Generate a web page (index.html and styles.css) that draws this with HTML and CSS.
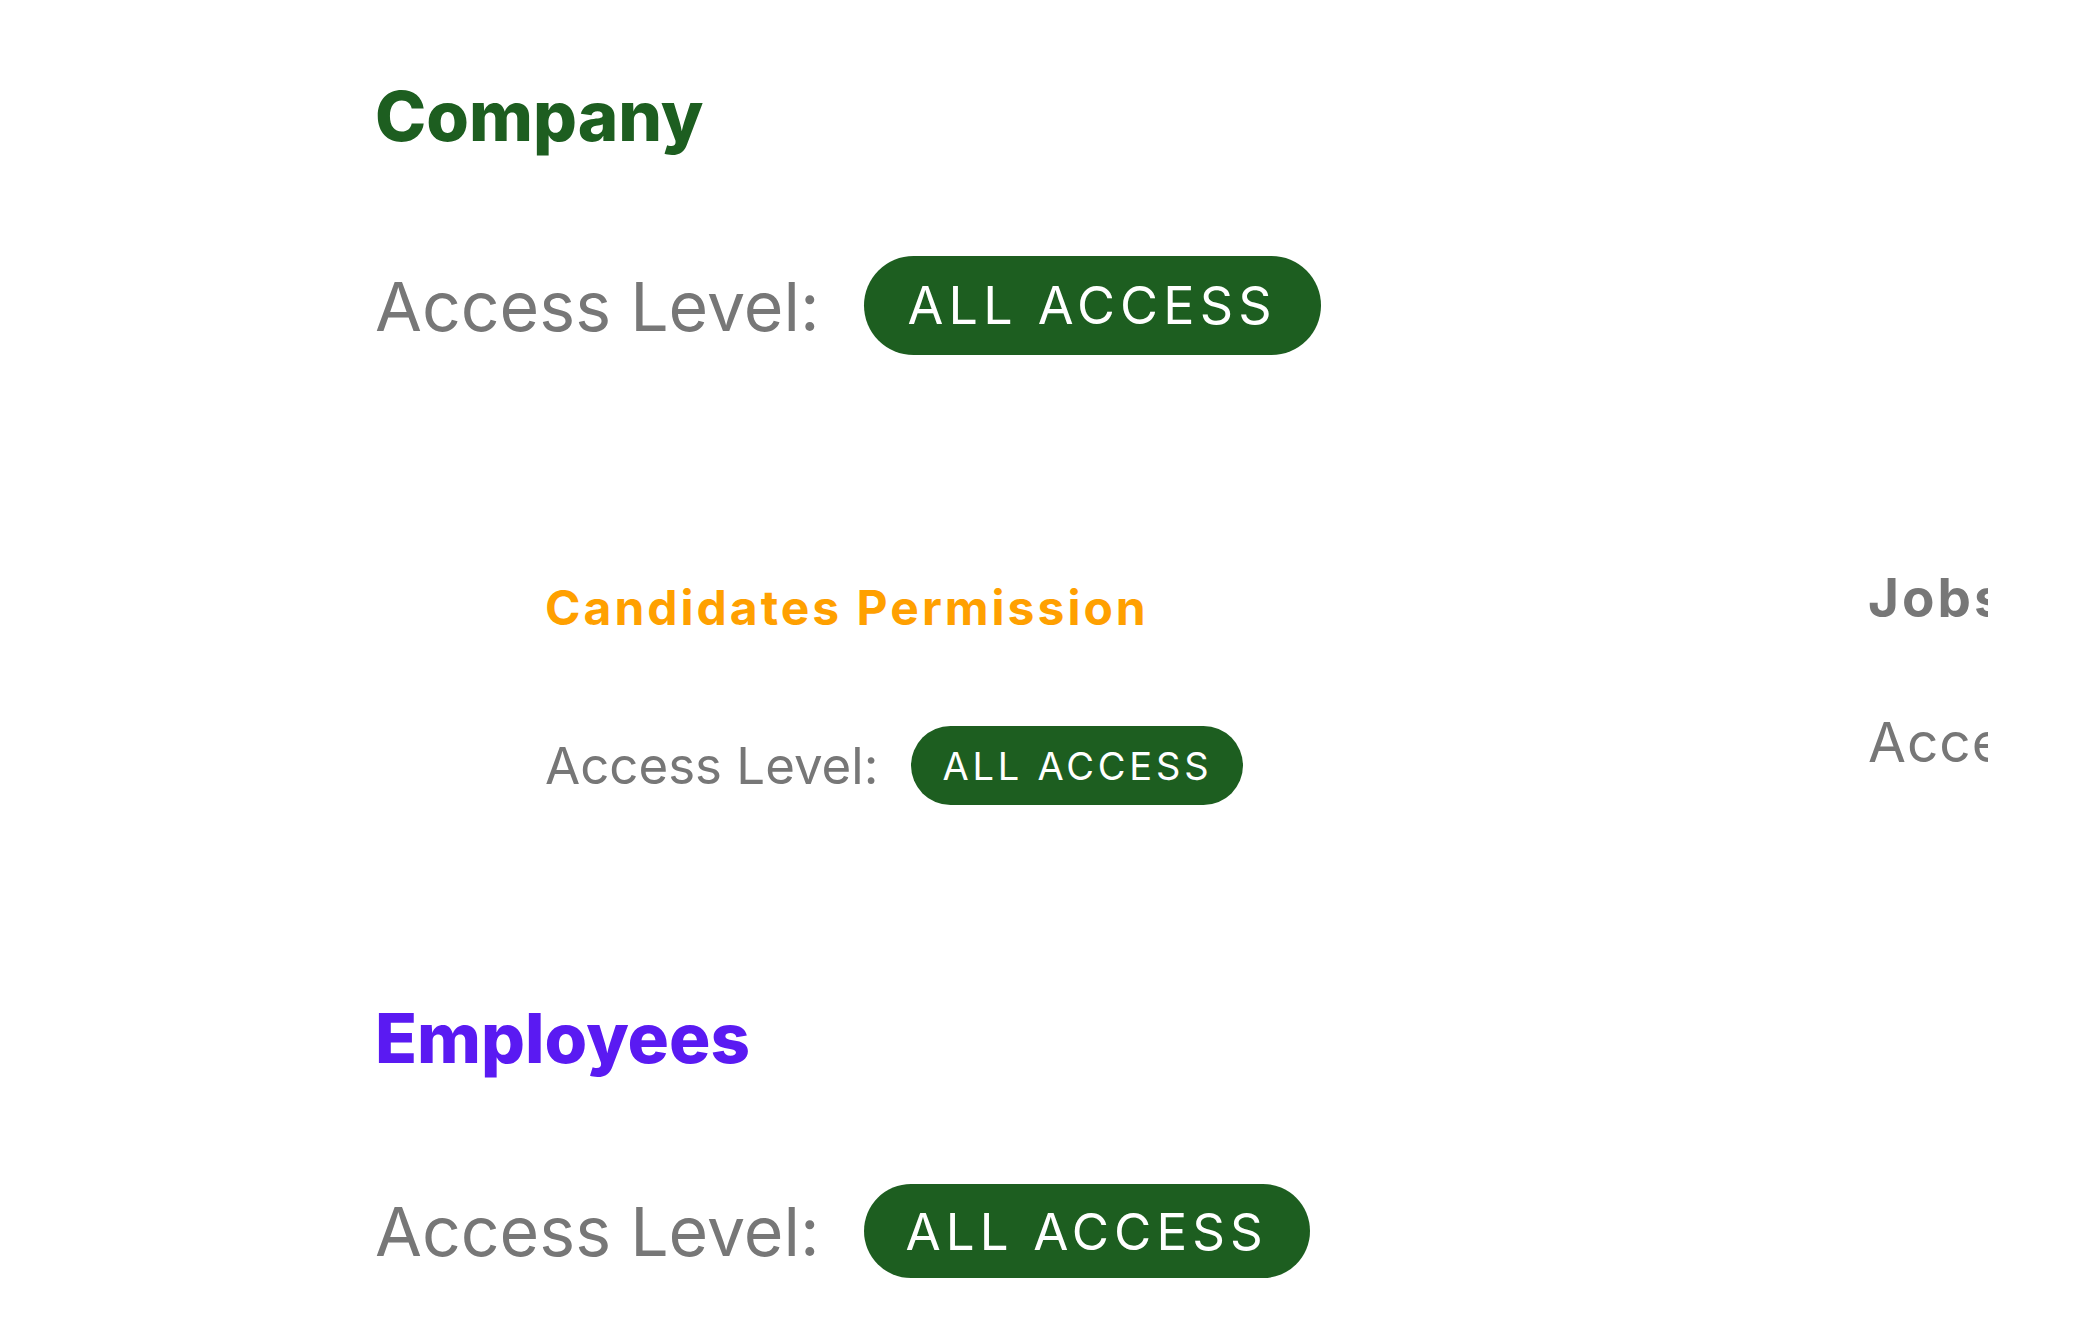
FILE: index.html
```html
<!DOCTYPE html>
<html lang="en">
<head>
<meta charset="utf-8">
<title>Permissions</title>
<link rel="stylesheet" href="styles.css">
</head>
<body>
<main class="page">
  <section class="section">
    <h2 class="title title--company">Company</h2>
    <div class="access access--lg">
      <span class="access__label">Access Level:</span>
      <span class="badge">ALL ACCESS</span>
    </div>
  </section>

  <section class="carousel">
    <div class="track">
      <div class="card">
        <h3 class="card__title card__title--candidates">Candidates Permission</h3>
        <div class="access access--md">
          <span class="access__label">Access Level:</span>
          <span class="badge">ALL ACCESS</span>
        </div>
      </div>
      <div class="card card--next">
        <h3 class="card__title card__title--jobs">Jobs Permission</h3>
        <div class="access access--md">
          <span class="access__label">Access Level:</span>
          <span class="badge">ALL ACCESS</span>
        </div>
      </div>
    </div>
  </section>

  <section class="section section--employees">
    <h2 class="title title--employees">Employees</h2>
    <div class="access access--lg access--last">
      <span class="access__label">Access Level:</span>
      <span class="badge">ALL ACCESS</span>
    </div>
  </section>
</main>
</body>
</html>
```

FILE: styles.css
```css
* { box-sizing: border-box; }

html, body {
  margin: 0;
  padding: 0;
  background: #ffffff;
}

body {
  font-family: Inter, "Liberation Sans", sans-serif;
  overflow: hidden;
  height: 1318px;
}

.page {
  padding-left: 375px;
  padding-top: 82px;
}

.title {
  margin: 0;
  font-size: 69px;
  font-weight: 800;
  line-height: 1;
  letter-spacing: 0;
}

.title--company { color: #1d5e20; }
.title--employees { color: #5a1af2; }

.access {
  display: flex;
  align-items: center;
}

.access__label {
  color: #777777;
  font-weight: 400;
  line-height: 1;
}

.badge {
  display: inline-flex;
  align-items: center;
  background: #1d5e20;
  color: #ffffff;
  border-radius: 999px;
  line-height: 1;
  letter-spacing: 0.1em;
}

.access--lg {
  margin-top: 105px;
  gap: 44px;
}
.access--lg .access__label { font-size: 68px; }
.access--lg .badge {
  font-size: 52px;
  padding: 0 44px 0 44px;
  height: 99px;
}

.carousel {
  width: 1613px;
  overflow: hidden;
  margin-top: 209px;
  padding-top: 20px;
  padding-left: 170px;
}

.track {
  display: flex;
}

.card {
  flex: 0 0 1323px;
}

.card__title {
  margin: 0;
  font-size: 48px;
  font-weight: 700;
  line-height: 1;
  letter-spacing: 3px;
}

.card__title--candidates { color: #ffa000; }
.card__title--jobs { color: #777777; }

.access--md {
  margin-top: 94px;
  gap: 33px;
}
.access--md .access__label { font-size: 51px; }
.access--md .badge {
  font-size: 38px;
  padding: 0 31px 0 31px;
  height: 79px;
}

.card--next .card__title {
  margin-top: -12px;
  font-size: 53px;
  letter-spacing: 3px;
}
.card--next .access--md { margin-top: 78px; }
.card--next .access__label { font-size: 55px; letter-spacing: 1px; }

.section--employees { margin-top: 199px; }
.access--last { margin-top: 111px; }
.access--last .badge { height: 94px; font-size: 51px; padding: 0 42px; }
```
